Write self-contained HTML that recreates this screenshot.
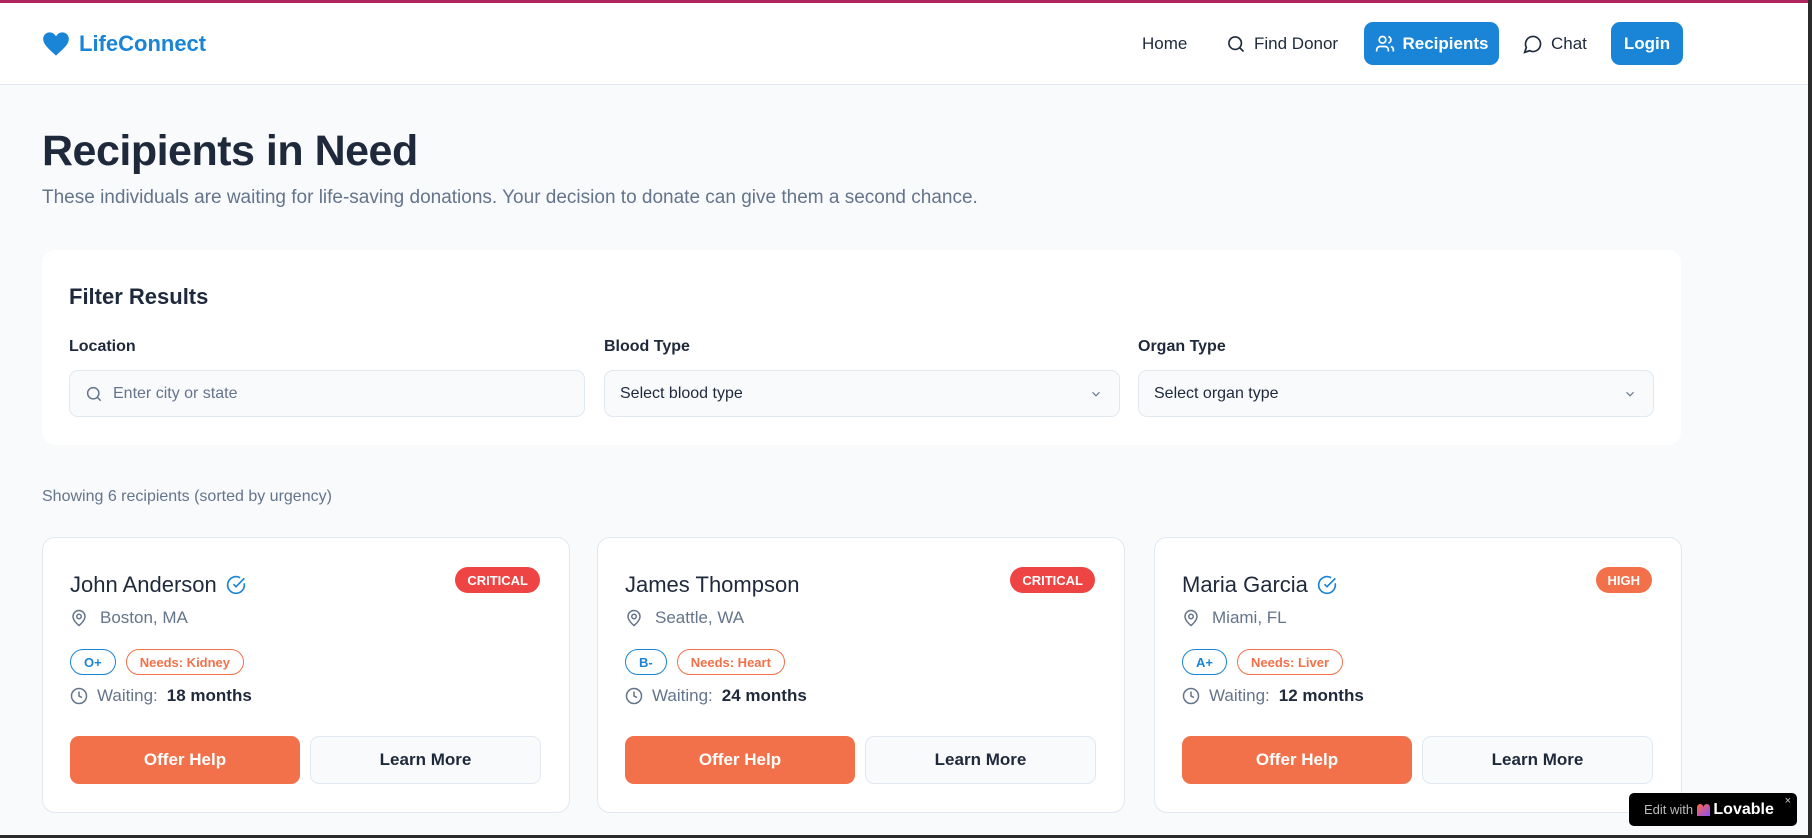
<!DOCTYPE html>
<html><head><meta charset="utf-8"><style>
*{box-sizing:border-box;margin:0;padding:0}
body{width:1812px;height:838px;overflow:hidden;background:#f8fafc;font-family:"Liberation Sans",sans-serif;color:#1e293b;position:relative}
.topbar{position:absolute;left:0;top:0;width:1812px;height:3px;background:#b0245e}
.hdr{position:absolute;left:0;top:3px;width:1808px;height:82px;background:#fff;border-bottom:1px solid #e2e8f0}
.rstrip{position:absolute;right:0;top:0;width:4px;height:838px;background:#2b2b2b}
.bstrip{position:absolute;left:0;bottom:0;width:1812px;height:3px;background:#2b2b2b}
.logo{position:absolute;left:42px;top:31px;display:flex;align-items:center;gap:9px;color:#1a84d6;font-weight:bold;font-size:22px}
.nav{position:absolute;top:22px;height:43px;display:flex;align-items:center;font-size:17px;color:#1e293b;gap:8px}
.btn{background:#1a84d6;color:#fff;border-radius:9px;justify-content:center}
h1{position:absolute;left:42px;top:127px;font-size:43px;font-weight:bold;color:#1e293b;letter-spacing:-0.5px}
.sub{position:absolute;left:42px;top:187px;font-size:19px;color:#64748b}
.filter{position:absolute;left:42px;top:250px;width:1639px;height:195px;background:#fff;border-radius:13px}
.ft{position:absolute;left:27px;top:34px;font-size:22px;font-weight:bold}
.lbl{position:absolute;top:88px;font-size:16px;font-weight:bold;color:#1e293b}
.inp{position:absolute;top:120px;height:47px;width:516px;border:1px solid #e2e8f0;border-radius:9px;background:#f8fafc;font-size:16px;display:flex;align-items:center;padding-left:15px;color:#1e293b}
.show{position:absolute;left:42px;top:488px;font-size:16px;color:#64748b}
.card{position:absolute;top:537px;width:528px;height:276px;background:#fff;border:1px solid #e2e8f0;border-radius:13px}
.name{position:absolute;left:27px;top:34px;font-size:22px;display:flex;align-items:center;gap:9px;color:#1e293b}
.badge{position:absolute;right:29px;top:29px;height:26px;border-radius:13px;color:#fff;font-size:13px;font-weight:bold;padding:0 12px;display:flex;align-items:center}
.loc{position:absolute;left:27px;top:70px;font-size:17px;color:#64748b;display:flex;align-items:center;gap:12px}
.tags{position:absolute;left:27px;top:111px;display:flex;gap:10px}
.tag{height:26px;border-radius:13px;padding:0 13px;font-size:13px;font-weight:bold;display:flex;align-items:center;border:1px solid}
.wait{position:absolute;left:27px;top:148px;font-size:17px;color:#64748b;display:flex;align-items:center;gap:9px}
.wait b{color:#1e293b}
.b1{position:absolute;left:27px;top:198px;width:230px;height:48px;background:#f2714a;border-radius:9px;color:#fff;font-size:17px;font-weight:bold;display:flex;align-items:center;justify-content:center}
.b2{position:absolute;left:267px;top:198px;width:231px;height:48px;background:#f8fafc;border:1px solid #e2e8f0;border-radius:9px;color:#1e293b;font-size:17px;font-weight:bold;display:flex;align-items:center;justify-content:center}
.lov{position:absolute;left:1629px;top:793px;width:168px;height:33px;background:#000;border-radius:5px;color:#fff;display:flex;align-items:center;padding-left:15px;font-size:13px}
</style></head><body>
<div class="topbar"></div>
<div class="hdr"></div>
<div class="logo"><svg width="28" height="26" viewBox="0 0 24 22"><path d="M12 21C7 16 1 12 1 6.5 1 3.5 3.5 1 6.5 1 9 1 11 2.5 12 4.5 13 2.5 15 1 17.5 1 20.5 1 23 3.5 23 6.5 23 12 17 16 12 21Z" fill="#1a84d6"/></svg>LifeConnect</div>
<div class="nav" style="left:1142px">Home</div>
<div class="nav" style="left:1226px"><svg width="20" height="20" viewBox="0 0 24 24" fill="none" stroke="#1e293b" stroke-width="2"><circle cx="11" cy="11" r="7.5"/><path d="M21 21l-4.5-4.5"/></svg>Find Donor</div>
<div class="nav btn" style="left:1364px;width:135px;font-weight:bold"><svg width="20" height="20" viewBox="0 0 24 24" fill="none" stroke="#fff" stroke-width="2"><circle cx="9" cy="7" r="4"/><path d="M2 21v-2a4 4 0 0 1 4-4h6a4 4 0 0 1 4 4v2M16 3.1a4 4 0 0 1 0 7.8M22 21v-2a4 4 0 0 0-3-3.9"/></svg>Recipients</div>
<div class="nav" style="left:1523px"><svg width="20" height="20" viewBox="0 0 24 24" fill="none" stroke="#1e293b" stroke-width="2"><path d="M7.9 20A9 9 0 1 0 4 16.1L2 22Z"/></svg>Chat</div>
<div class="nav btn" style="left:1611px;width:72px;font-weight:bold">Login</div>

<h1>Recipients in Need</h1>
<div class="sub">These individuals are waiting for life-saving donations. Your decision to donate can give them a second chance.</div>

<div class="filter">
<div class="ft">Filter Results</div>
<div class="lbl" style="left:27px">Location</div>
<div class="lbl" style="left:562px">Blood Type</div>
<div class="lbl" style="left:1096px">Organ Type</div>
<div class="inp" style="left:27px;color:#64748b"><svg width="18" height="18" viewBox="0 0 24 24" fill="none" stroke="#64748b" stroke-width="2" style="margin-right:10px"><circle cx="11" cy="11" r="7.5"/><path d="M21 21l-4.5-4.5"/></svg>Enter city or state</div>
<div class="inp" style="left:562px">Select blood type<svg style="position:absolute;right:16px" width="14" height="14" viewBox="0 0 24 24" fill="none" stroke="#64748b" stroke-width="2"><path d="M6 9l6 6 6-6"/></svg></div>
<div class="inp" style="left:1096px">Select organ type<svg style="position:absolute;right:16px" width="14" height="14" viewBox="0 0 24 24" fill="none" stroke="#64748b" stroke-width="2"><path d="M6 9l6 6 6-6"/></svg></div>
</div>

<div class="show">Showing 6 recipients (sorted by urgency)</div>

<div class="card" style="left:42px">
<div class="name">John Anderson <svg width="20" height="20" viewBox="0 0 24 24" fill="none" stroke="#1a84d6" stroke-width="2"><path d="M21.8 10A10 10 0 1 1 17 3.3"/><path d="M9 11l3 3L22 4"/></svg></div>
<div class="badge" style="background:#ef4444">CRITICAL</div>
<div class="loc"><svg width="18" height="18" viewBox="0 0 24 24" fill="none" stroke="#64748b" stroke-width="2"><path d="M20 10c0 6-8 12-8 12s-8-6-8-12a8 8 0 0 1 16 0Z"/><circle cx="12" cy="10" r="3"/></svg>Boston, MA</div>
<div class="tags"><div class="tag" style="color:#1a84d6;border-color:#1a84d6">O+</div><div class="tag" style="color:#f2714a;border-color:#f2714a">Needs: Kidney</div></div>
<div class="wait"><svg width="18" height="18" viewBox="0 0 24 24" fill="none" stroke="#64748b" stroke-width="2"><circle cx="12" cy="12" r="10"/><path d="M12 6v6l4 2"/></svg>Waiting: <b>18 months</b></div>
<div class="b1">Offer Help</div><div class="b2">Learn More</div>
</div>

<div class="card" style="left:597px">
<div class="name">James Thompson</div>
<div class="badge" style="background:#ef4444">CRITICAL</div>
<div class="loc"><svg width="18" height="18" viewBox="0 0 24 24" fill="none" stroke="#64748b" stroke-width="2"><path d="M20 10c0 6-8 12-8 12s-8-6-8-12a8 8 0 0 1 16 0Z"/><circle cx="12" cy="10" r="3"/></svg>Seattle, WA</div>
<div class="tags"><div class="tag" style="color:#1a84d6;border-color:#1a84d6">B-</div><div class="tag" style="color:#f2714a;border-color:#f2714a">Needs: Heart</div></div>
<div class="wait"><svg width="18" height="18" viewBox="0 0 24 24" fill="none" stroke="#64748b" stroke-width="2"><circle cx="12" cy="12" r="10"/><path d="M12 6v6l4 2"/></svg>Waiting: <b>24 months</b></div>
<div class="b1">Offer Help</div><div class="b2">Learn More</div>
</div>

<div class="card" style="left:1154px">
<div class="name">Maria Garcia <svg width="20" height="20" viewBox="0 0 24 24" fill="none" stroke="#1a84d6" stroke-width="2"><path d="M21.8 10A10 10 0 1 1 17 3.3"/><path d="M9 11l3 3L22 4"/></svg></div>
<div class="badge" style="background:#f2714a">HIGH</div>
<div class="loc"><svg width="18" height="18" viewBox="0 0 24 24" fill="none" stroke="#64748b" stroke-width="2"><path d="M20 10c0 6-8 12-8 12s-8-6-8-12a8 8 0 0 1 16 0Z"/><circle cx="12" cy="10" r="3"/></svg>Miami, FL</div>
<div class="tags"><div class="tag" style="color:#1a84d6;border-color:#1a84d6">A+</div><div class="tag" style="color:#f2714a;border-color:#f2714a">Needs: Liver</div></div>
<div class="wait"><svg width="18" height="18" viewBox="0 0 24 24" fill="none" stroke="#64748b" stroke-width="2"><circle cx="12" cy="12" r="10"/><path d="M12 6v6l4 2"/></svg>Waiting: <b>12 months</b></div>
<div class="b1">Offer Help</div><div class="b2">Learn More</div>
</div>

<div class="lov"><span style="color:#bbb">Edit with</span>&nbsp;<svg width="13" height="12" viewBox="0 0 12 11"><defs><linearGradient id="g" x1="0" y1="0" x2="1" y2="1"><stop offset="0" stop-color="#ff6a3d"/><stop offset="1" stop-color="#8a4dff"/></linearGradient></defs><path d="M0 3a3 3 0 0 1 6 0 3 3 0 0 1 6 0v8H0Z" fill="url(#g)"/></svg>&nbsp;<b style="font-size:16px">Lovable</b><span style="position:absolute;right:6px;top:2px;font-size:11px;color:#ccc">×</span></div>
<div class="rstrip"></div><div class="bstrip"></div>
</body></html>
